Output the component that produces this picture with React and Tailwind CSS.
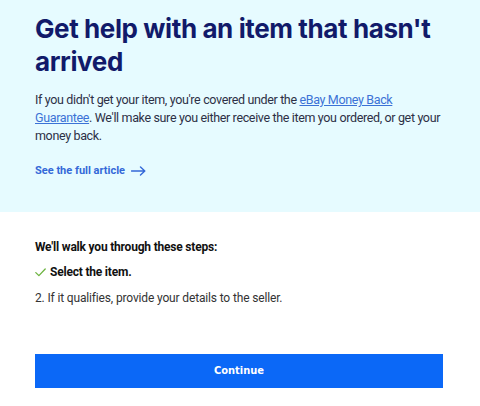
import React from "react";

function ArrowRight() {
  return (
    <svg width="15" height="10" viewBox="0 0 15 10" fill="none" className="ml-[6px]">
      <path d="M0.5 5H13.5M9.5 1L13.8 5L9.5 9" stroke="currentColor" strokeWidth="1.4" strokeLinecap="round" strokeLinejoin="round" />
    </svg>
  );
}

function Check() {
  return (
    <svg width="11" height="9" viewBox="0 0 11 9" fill="none" className="mr-[4px]">
      <path d="M0.8 4.6L3.9 7.6L10.2 1" stroke="#6cb33f" strokeWidth="1.3" strokeLinecap="round" strokeLinejoin="round" />
    </svg>
  );
}

export default function App() {
  return (
    <div className="w-[480px] h-[406px] bg-white font-['Roboto','Liberation_Sans',sans-serif] overflow-hidden">
      {/* Hero panel */}
      <section className="bg-[#e6fbff] h-[212px] pl-[35px] pr-[37px] pt-[12px]">
        <h1 className="text-[26px] leading-[33px] font-bold text-[#111a6a] font-['Inter','Liberation_Sans',sans-serif] tracking-[-0.4px]">
          Get help with an item that hasn't arrived
        </h1>
        <p className="mt-[13px] text-[12.5px] leading-[18px] text-[#2d3046] tracking-[-0.35px]">
          If you didn't get your item, you're covered under the{" "}
          <a href="#" className="text-[#3b72d6] underline">eBay Money Back Guarantee</a>
          . We'll make sure you either receive the item you ordered, or get your money back.
        </p>
        <a href="#" className="mt-[18px] inline-flex items-center text-[11px] leading-[16px] font-bold text-[#3468d8]">
          See the full article
          <ArrowRight />
        </a>
      </section>

      {/* Steps */}
      <section className="pl-[35px] pr-[37px] pt-[27px]">
        <p className="text-[12px] leading-[16px] font-bold text-[#111] tracking-[-0.2px]">We'll walk you through these steps:</p>
        <div className="mt-[9px] flex items-center text-[12px] leading-[16px] font-bold text-[#111] tracking-[-0.2px]">
          <Check />
          Select the item.
        </div>
        <p className="mt-[10px] text-[12px] leading-[16px] text-[#333] tracking-[-0.15px]">
          2. If it qualifies, provide your details to the seller.
        </p>
        <button className="mt-[48px] w-full h-[34px] bg-[#0b68f7] text-white text-[11px] font-bold font-['DejaVu_Sans_Condensed','DejaVu_Sans',sans-serif]">
          Continue
        </button>
      </section>
    </div>
  );
}
